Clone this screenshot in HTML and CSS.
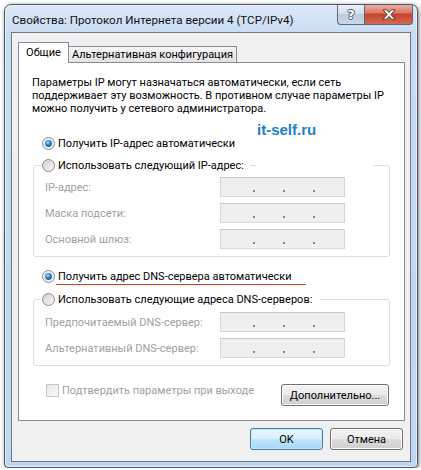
FILE: index.html
```html
<!DOCTYPE html>
<html lang="ru">
<head>
<meta charset="utf-8">
<title>Свойства: Протокол Интернета версии 4 (TCP/IPv4)</title>
<link rel="stylesheet" href="styles.css">
</head>
<body>
<svg class="defs" width="0" height="0" aria-hidden="true">
  <defs>
    <linearGradient id="radioFill" x1="0" y1="0" x2="1" y2="1">
      <stop offset="0" stop-color="#cdcdcd"/>
      <stop offset="1" stop-color="#fbfbfb"/>
    </linearGradient>
    <radialGradient id="dotFill" cx="0.4" cy="0.35" r="0.75">
      <stop offset="0" stop-color="#b5e2fc"/>
      <stop offset="0.45" stop-color="#2e8ad0"/>
      <stop offset="1" stop-color="#0c4a85"/>
    </radialGradient>
  </defs>
</svg>
<div class="window">
  <div class="titlebar">
    <div class="title">Свойства: Протокол Интернета версии 4 (TCP/IPv4)</div>
    <div class="caption-buttons">
      <div class="cap-btn help"><span>?</span></div>
      <div class="cap-btn close">
        <svg width="14" height="11" viewBox="0 0 14 11"><path d="M1 0.8 H4.6 L7 3.6 L9.4 0.8 H13 L8.9 5.5 L13 10.2 H9.4 L7 7.4 L4.6 10.2 H1 L5.1 5.5 Z" fill="#fff" stroke="#4a3030" stroke-width="0.9" stroke-linejoin="round"/></svg>
      </div>
    </div>
  </div>
  <div class="client">
    <div class="tabs">
      <div class="tab active">Общие</div>
      <div class="tab">Альтернативная конфигурация</div>
    </div>
    <div class="panel">
      <p class="desc">Параметры IP могут назначаться автоматически, если сеть<br>поддерживает эту возможность. В противном случае параметры IP<br>можно получить у сетевого администратора.</p>
      <div class="brand">it-self.ru</div>
      <div class="radio-row top">
        <svg class="radio" width="13" height="13" viewBox="0 0 13 13"><circle cx="6.5" cy="6.5" r="6" fill="#f4f4f4" stroke="#8b8b8b"/><circle cx="6.5" cy="6.5" r="4.2" fill="#fff" stroke="#d9d9d9" stroke-width="0.6"/><circle cx="6.5" cy="6.5" r="3.4" fill="url(#dotFill)"/></svg>
        <span>Получить IP-адрес автоматически</span>
      </div>
      <fieldset class="group g1">
        <legend>
          <span class="radio-row">
            <svg class="radio" width="13" height="13" viewBox="0 0 13 13"><circle cx="6.5" cy="6.5" r="6" fill="url(#radioFill)" stroke="#8b8b8b"/></svg>
            <span>Использовать следующий IP-адрес:</span>
          </span>
          <span class="dash"></span>
        </legend>
        <div class="rows">
          <div class="field-row"><span class="lbl">IP-адрес:</span><span class="ipbox"><i></i><i></i><i></i></span></div>
          <div class="field-row"><span class="lbl">Маска подсети:</span><span class="ipbox"><i></i><i></i><i></i></span></div>
          <div class="field-row"><span class="lbl">Основной шлюз:</span><span class="ipbox"><i></i><i></i><i></i></span></div>
        </div>
      </fieldset>
      <div class="radio-row r3">
        <svg class="radio" width="13" height="13" viewBox="0 0 13 13"><circle cx="6.5" cy="6.5" r="6" fill="#f4f4f4" stroke="#8b8b8b"/><circle cx="6.5" cy="6.5" r="4.2" fill="#fff" stroke="#d9d9d9" stroke-width="0.6"/><circle cx="6.5" cy="6.5" r="3.4" fill="url(#dotFill)"/></svg>
        <span>Получить адрес DNS-сервера автоматически</span>
      </div>
      <div class="annot"></div>
      <fieldset class="group g2">
        <legend>
          <span class="radio-row">
            <svg class="radio" width="13" height="13" viewBox="0 0 13 13"><circle cx="6.5" cy="6.5" r="6" fill="url(#radioFill)" stroke="#8b8b8b"/></svg>
            <span>Использовать следующие адреса DNS-серверов:</span>
          </span>
        </legend>
        <div class="rows">
          <div class="field-row"><span class="lbl">Предпочитаемый DNS-сервер:</span><span class="ipbox"><i></i><i></i><i></i></span></div>
          <div class="field-row"><span class="lbl">Альтернативный DNS-сервер:</span><span class="ipbox"><i></i><i></i><i></i></span></div>
        </div>
      </fieldset>
      <div class="bottom-row">
        <div class="check"><span class="box"></span><span class="check-text">Подтвердить параметры при выходе</span></div>
        <div class="btn adv">Дополнительно...</div>
      </div>
    </div>
    <div class="dialog-buttons">
      <div class="btn default">OK</div>
      <div class="btn">Отмена</div>
    </div>
  </div>
</div>
</body>
</html>
```
FILE: styles.css
```css
* { box-sizing: border-box; }
html, body { margin: 0; background: #fff; }
body {
  padding: 4px 0 0 4px;
  font-family: "Segoe UI", Roboto, "Noto Sans", sans-serif;
  font-size: 11px;
  color: #000;
}
.defs { display: block; width: 0; height: 0; overflow: hidden; }

.window {
  width: 414px;
  height: 464px;
  border: 1px solid #4d5866;
  border-radius: 7px 7px 4px 4px;
  background: linear-gradient(180deg, #dbe8f7 0, #c8dcf2 30px, #bfd6ef 100%);
  box-shadow: 1px 1px 4px rgba(0,0,0,.55), inset 0 0 0 1px rgba(255,255,255,.55);
  display: flex;
  flex-direction: column;
}

.titlebar {
  height: 27px;
  display: flex;
  justify-content: space-between;
  padding: 0 4px 0 7px;
}
.title { padding-top: 8px; line-height: 14px; font-size: 11.6px; white-space: nowrap; color: #111; }
.caption-buttons { display: flex; height: 20px; }
.cap-btn {
  height: 20px;
  border: 1px solid #5b6879;
  border-top: none;
  display: flex;
  align-items: center;
  justify-content: center;
}
.help {
  width: 27px;
  border-right: none;
  border-radius: 0 0 0 4px;
  background: linear-gradient(180deg, #e9f0f8 0, #d4e0ed 45%, #bccbdd 50%, #cad8e8 100%);
}
.help span {
  font: bold 13px "DejaVu Sans", sans-serif;
  color: #fff;
  text-shadow: 1px 0 0 #4b5868, -1px 0 0 #4b5868, 0 1px 0 #4b5868, 0 -1px 0 #4b5868;
  line-height: 14px;
}
.close {
  width: 49px;
  border-radius: 0 0 4px 0;
  background: linear-gradient(180deg, #eab0a4 0, #da7a66 40%, #c7432c 50%, #d66a53 100%);
}

.client {
  flex: 1;
  margin: 0 6px 5px 6px;
  border: 1px solid #6a7888;
  background: #f0f0f0;
  padding: 9px 5px 11px 6px;
  display: flex;
  flex-direction: column;
}

.tabs { display: flex; align-items: flex-end; height: 20px; }
.tab {
  height: 16px;
  width: 168px;
  border: 1px solid #898c95;
  border-left: none;
  border-bottom: none;
  background: linear-gradient(180deg, #f6f6f6, #e3e3e3);
  line-height: 15px;
  text-align: center;
  white-space: nowrap;
}
.tab.active {
  height: 21px;
  width: 51px;
  margin-bottom: -1px;
  border-left: 1px solid #898c95;
  background: #fff;
  line-height: 19px;
  position: relative;
  z-index: 1;
}

.panel {
  flex: 1;
  background: #fff;
  border: 1px solid #898c95;
  padding: 0 14px 0 13px;
  display: flex;
  flex-direction: column;
}

.desc { margin: 13px 0 0; line-height: 13px; white-space: nowrap; }

.brand {
  margin: 9px 0 0 225px;
  font: bold 15px "Liberation Sans", Arial, sans-serif;
  color: #1b80cc;
  line-height: 12px;
  height: 12px;
}

.radio-row {
  display: flex;
  align-items: center;
  height: 14px;
  gap: 3px;
  white-space: nowrap;
}
.radio-row .radio { flex: none; }
.radio-row.top { margin-left: 10px; }
.radio-row.r3 { margin: 12px 0 0 10px; }

.annot { height: 1px; width: 250px; margin: 1px 0 0 24px; background: #dc3c1e; }

.group {
  margin: 8px 0 0 1px;
  padding: 0;
  border: 1px solid #d5dfe5;
  border-radius: 3px;
  min-width: 0;
}
.group legend {
  margin-left: 7px;
  padding: 0 0 0 1px;
  height: 14px;
  display: flex;
  align-items: center;
}
.g1 legend { width: 332px; }
.g1 legend .radio-row { width: 208px; }
.g2 { margin-top: 7px; }
.g2 legend { width: 279px; }
.dash { width: 6px; height: 1px; background: #d5dfe5; }

.rows {
  padding: 5px 0 7px 11px;
  display: flex;
  flex-direction: column;
  gap: 6px;
}
.g2 .rows { padding-top: 6px; }
.field-row { display: flex; align-items: center; height: 20px; }
.lbl { width: 175px; color: #a0a0a0; white-space: nowrap; }
.ipbox {
  width: 125px;
  height: 20px;
  border: 1px solid #d3d6da;
  border-top-color: #c2c5ca;
  background: #efefef;
  display: flex;
  align-items: flex-end;
  padding: 0 0 4px 32px;
  gap: 28px;
}
.ipbox i { width: 2px; height: 2px; background: #858585; }

.bottom-row {
  margin-top: 18px;
  display: flex;
  align-items: flex-start;
}
.check { display: flex; align-items: center; height: 13px; margin-left: 14px; gap: 3px; }
.check .box {
  width: 13px;
  height: 13px;
  border: 1px solid #c5c5c5;
  background: linear-gradient(135deg, #e6e6e6, #fafafa);
}
.check-text { color: #a0a0a0; white-space: nowrap; }

.btn {
  height: 22px;
  border: 1px solid #707070;
  border-radius: 3px;
  background: linear-gradient(180deg, #f3f3f3 0, #ebebeb 50%, #dddddd 50%, #cfcfcf 100%);
  box-shadow: inset 0 0 0 1px #fbfbfb;
  display: flex;
  align-items: center;
  justify-content: center;
  white-space: nowrap;
}
.btn.adv { width: 108px; margin-left: auto; margin-right: 1px; }

.dialog-buttons {
  margin-top: 7px;
  display: flex;
  justify-content: flex-end;
  gap: 7px;
  padding-right: 2px;
}
.dialog-buttons .btn { width: 73px; }
.btn.default {
  border-color: #3c7fb1;
  background: linear-gradient(180deg, #eaf6fd 0, #d9f0fc 50%, #bee6fd 50%, #a7d9f5 100%);
  box-shadow: inset 0 0 0 1px #c6e6f8;
}
```
